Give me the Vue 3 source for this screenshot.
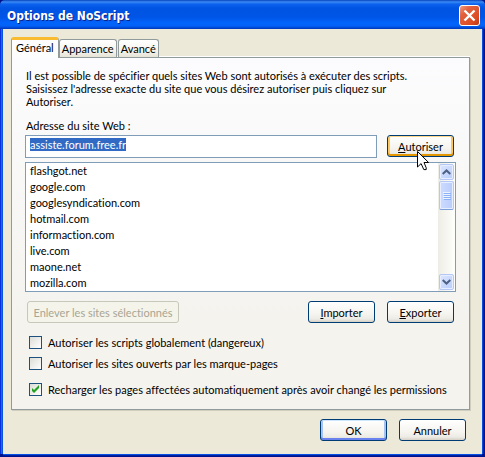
<script setup>
import { onMounted, ref } from 'vue'

const tabs = ['Général', 'Apparence', 'Avancé']
const activeTab = ref('Général')
const address = ref('assiste.forum.free.fr')
const addressBox = ref(null)
const sites = [
  'flashgot.net',
  'google.com',
  'googlesyndication.com',
  'hotmail.com',
  'informaction.com',
  'live.com',
  'maone.net',
  'mozilla.com',
]
const allowGlobal = ref(false)
const allowBookmarks = ref(false)
const reloadPages = ref(true)

onMounted(() => {
  addressBox.value.focus()
  addressBox.value.select()
})
</script>

<template>
  <div class="window">
    <header class="titlebar">
      <h1 class="title">Options de NoScript</h1>
      <button class="close" type="button" aria-label="Fermer">
        <svg width="21" height="21" viewBox="0 0 21 21">
          <defs>
            <linearGradient id="closeFill" x1="0" y1="0" x2="1" y2="1">
              <stop offset="0" stop-color="#f0a088" />
              <stop offset="0.3" stop-color="#e2613f" />
              <stop offset="0.75" stop-color="#dc4a22" />
              <stop offset="1" stop-color="#b8350f" />
            </linearGradient>
          </defs>
          <rect x="0.5" y="0.5" width="20" height="20" rx="2.5" fill="url(#closeFill)" stroke="#fff" />
          <path d="M5.5 5.5L15.5 15.5M15.5 5.5L5.5 15.5" stroke="#fff" stroke-width="2.4" />
        </svg>
      </button>
    </header>

    <main class="body">
      <nav class="tabs" role="tablist">
        <button
          v-for="tab in tabs"
          :key="tab"
          class="tab"
          :class="{ active: tab === activeTab }"
          type="button"
          role="tab"
          :aria-selected="tab === activeTab"
          @click="activeTab = tab"
        >{{ tab }}</button>
      </nav>

      <section class="panel">
        <p class="intro">
          Il est possible de spécifier quels sites Web sont autorisés à exécuter des scripts.<br />
          Saisissez l'adresse exacte du site que vous désirez autoriser puis cliquez sur<br />
          Autoriser.
        </p>

        <label class="caption" for="address">Adresse du site Web :</label>
        <div class="address-row">
          <input id="address" ref="addressBox" v-model="address" class="address" type="text" spellcheck="false" />
          <div class="hovered">
            <button class="btn hot" type="button"><u>A</u>utoriser</button>
            <svg class="pointer" width="13" height="20" viewBox="0 0 13 20">
              <path
                d="M0.5 0.5V16L4.1 12.6L6.8 18.6H9.2V16.8L7 11.5H11.6Z"
                fill="#fff"
                stroke="#000"
              />
            </svg>
          </div>
        </div>

        <div class="list">
          <ul class="sites">
            <li v-for="site in sites" :key="site">{{ site }}</li>
          </ul>
          <div class="scrollbar">
            <button class="arrow" type="button" aria-label="Haut">
              <svg width="9" height="6" viewBox="0 0 9 6">
                <path d="M0.7 5L4.5 1.4L8.3 5" fill="none" stroke="#4d6185" stroke-width="2" />
              </svg>
            </button>
            <div class="thumb">
              <i></i><i></i><i></i><i></i>
            </div>
            <button class="arrow down" type="button" aria-label="Bas">
              <svg width="9" height="6" viewBox="0 0 9 6">
                <path d="M0.7 1L4.5 4.6L8.3 1" fill="none" stroke="#4d6185" stroke-width="2" />
              </svg>
            </button>
          </div>
        </div>

        <div class="list-actions">
          <button class="btn remove" type="button" disabled>Enlever les sites sélectionnés</button>
          <button class="btn" type="button"><u>I</u>mporter</button>
          <button class="btn" type="button"><u>E</u>xporter</button>
        </div>

        <div class="checks">
          <label class="check"><input v-model="allowGlobal" type="checkbox" /><span>Autoriser les scripts globalement (dangereux)</span></label>
          <label class="check"><input v-model="allowBookmarks" type="checkbox" /><span>Autoriser les sites ouverts par les marque-pages</span></label>
          <label class="check reload">
            <span class="box">
              <input v-model="reloadPages" type="checkbox" />
              <svg v-if="reloadPages" class="tick" width="7" height="7" viewBox="0 0 7 7">
                <path d="M0 2L2 4L7 -1V2L2 7L0 5Z" fill="#21a121" />
              </svg>
            </span>
            <span>Recharger les pages affectées automatiquement après avoir changé les permissions</span>
          </label>
        </div>
      </section>

      <footer class="footer">
        <button class="btn default" type="button">OK</button>
        <button class="btn" type="button">Annuler</button>
      </footer>
    </main>
  </div>
</template>

<style>
body {
  background: #ece9d8;
}
</style>

<style scoped>
.window,
.window * {
  box-sizing: border-box;
}

.window {
  display: flex;
  flex-direction: column;
  min-height: 100vh;
  background: #00138c;
  color: #000;
  font: 11px/13px Lato, "DejaVu Sans Condensed", sans-serif;
  font-variant-ligatures: none;
  white-space: nowrap;
  cursor: default;
}

button,
input {
  margin: 0;
  font: inherit;
  color: inherit;
}

.titlebar {
  display: flex;
  align-items: center;
  justify-content: space-between;
  height: 29px;
  padding: 2px 5px 0 7px;
  border-radius: 5px 5px 0 0;
  background: linear-gradient(
    #0843bd 0,
    #3a8cf5 2px,
    #0d62ee 4px,
    #0054e3 8px,
    #0055e6 17px,
    #0264fb 23px,
    #0261f6 26px,
    #0144cf 28px,
    #0036b5 29px
  );
}

.title {
  margin: 0;
  color: #fff;
  font: bold 12px/16px "DejaVu Sans Condensed", "DejaVu Sans", sans-serif;
  text-shadow: 1px 1px 0 #0f1f8a;
}

.close {
  display: block;
  width: 21px;
  height: 21px;
  padding: 0;
  border: 0;
  background: none;
}

.close svg {
  display: block;
}

.body {
  flex: 1;
  margin: 0 3px 3px;
  padding: 8px 12px 12px 8px;
  background: #ece9d8;
  box-shadow:
    -1px 0 0 #0855dd,
    -2px 0 0 #166aee,
    -3px 0 0 #0831d9,
    1px 0 0 #0450e0,
    2px 0 0 #001ea0,
    0 1px 0 #0450e0,
    0 2px 0 #001ea0;
}

.tabs {
  display: flex;
  align-items: flex-end;
  height: 20px;
}

.tab {
  height: 18px;
  margin-right: 1px;
  padding: 0 2px;
  border: 1px solid #919b9c;
  border-bottom: 0;
  border-radius: 3px 3px 0 0;
  background: linear-gradient(#fff, #f3f2ea 70%, #e6e3d6);
}

.tab.active {
  z-index: 1;
  height: 21px;
  margin: 0 0 -1px;
  padding: 0 4px 3px;
  border-top: 3px solid #f9bb30;
  background: #fdfdfe;
}

.panel {
  padding: 11px 13px 13px;
  border: 1px solid #919b9c;
  background: linear-gradient(#fcfcfe, #f4f3ee 75%);
  box-shadow: 1px 1px 0 #d0cebf, 0 -1px 0 #fff;
}

.intro {
  margin: 0 1px 11px;
}

.caption {
  display: block;
  margin: 0 1px 3px;
}

.address-row {
  display: flex;
  gap: 10px;
  margin-right: 2px;
  margin-bottom: 4px;
}

.address {
  flex: 1;
  min-width: 0;
  height: 23px;
  padding: 0 4px 4px;
  border: 1px solid #7f9db9;
  outline: 0;
  background: #fff;
}

.address::selection {
  background: #316ac5;
  color: #fff;
}

.btn {
  width: 67px;
  height: 22px;
  padding: 0;
  border: 1px solid #003c74;
  border-radius: 3px;
  background: linear-gradient(#fff, #f5f4ef 60%, #ecebe5 85%, #d6d0c5);
  text-align: center;
}

.btn.hot {
  box-shadow: inset 0 1px 0 #fdd58b, inset 0 -2px 0 #e59700, inset 2px 0 0 #fbc761, inset -2px 0 0 #fbc761;
}

.btn.default {
  box-shadow: inset 0 1px 0 #cee7ff, inset 0 -2px 0 #6982ee, inset 2px 0 0 #a9c3f0, inset -2px 0 0 #a9c3f0;
}

.btn:disabled {
  border-color: #c9c7ba;
  background: #f5f4ea;
  color: #a8a594;
}

.hovered {
  position: relative;
}

.pointer {
  position: absolute;
  z-index: 2;
  top: 16px;
  left: 30px;
}

.list {
  display: flex;
  height: 130px;
  border: 1px solid #7f9db9;
  background: #fff;
}

.sites {
  flex: 1;
  margin: 0;
  padding: 0 4px;
  overflow: hidden;
  list-style: none;
  line-height: 16px;
}

.scrollbar {
  display: flex;
  flex-direction: column;
  gap: 1px;
  width: 17px;
  padding: 1px;
  background: linear-gradient(90deg, #eeede5, #fefefb);
}

.arrow,
.thumb {
  display: flex;
  align-items: center;
  justify-content: center;
  width: 15px;
  height: 16px;
  padding: 0;
  border: 1px solid #b5c8f5;
  border-radius: 2px;
  background: linear-gradient(135deg, #dce6ff, #b9cdfb);
  box-shadow: inset 0 0 0 1px #e6eeff;
}

.arrow.down {
  margin-top: auto;
}

.thumb {
  flex-direction: column;
  gap: 1px;
  height: 29px;
  border-bottom-color: #7d9fd8;
  background: linear-gradient(90deg, #cddbff, #b8ccfb);
}

.thumb i {
  width: 7px;
  height: 1px;
  background: #eef4fe;
  box-shadow: 1px 1px 0 #8cb0f8;
}

.list-actions {
  display: flex;
  gap: 12px;
  margin: 9px 2px 13px;
}

.remove {
  width: 152px;
  margin-right: auto;
}

.checks {
  display: flex;
  flex-direction: column;
  gap: 8px;
  margin-left: 4px;
}

.check {
  display: flex;
  gap: 6px;
  height: 13px;
}

.check.reload {
  margin-top: 5px;
}

.check input {
  display: block;
  width: 13px;
  height: 13px;
  border: 1px solid #1c5180;
  appearance: none;
  background: linear-gradient(135deg, #dcdcd7, #fff);
}

.box {
  position: relative;
}

.tick {
  position: absolute;
  top: 3px;
  left: 3px;
  overflow: visible;
}

.footer {
  display: flex;
  justify-content: flex-end;
  gap: 12px;
  margin: 9px 4px 0 0;
}
</style>
